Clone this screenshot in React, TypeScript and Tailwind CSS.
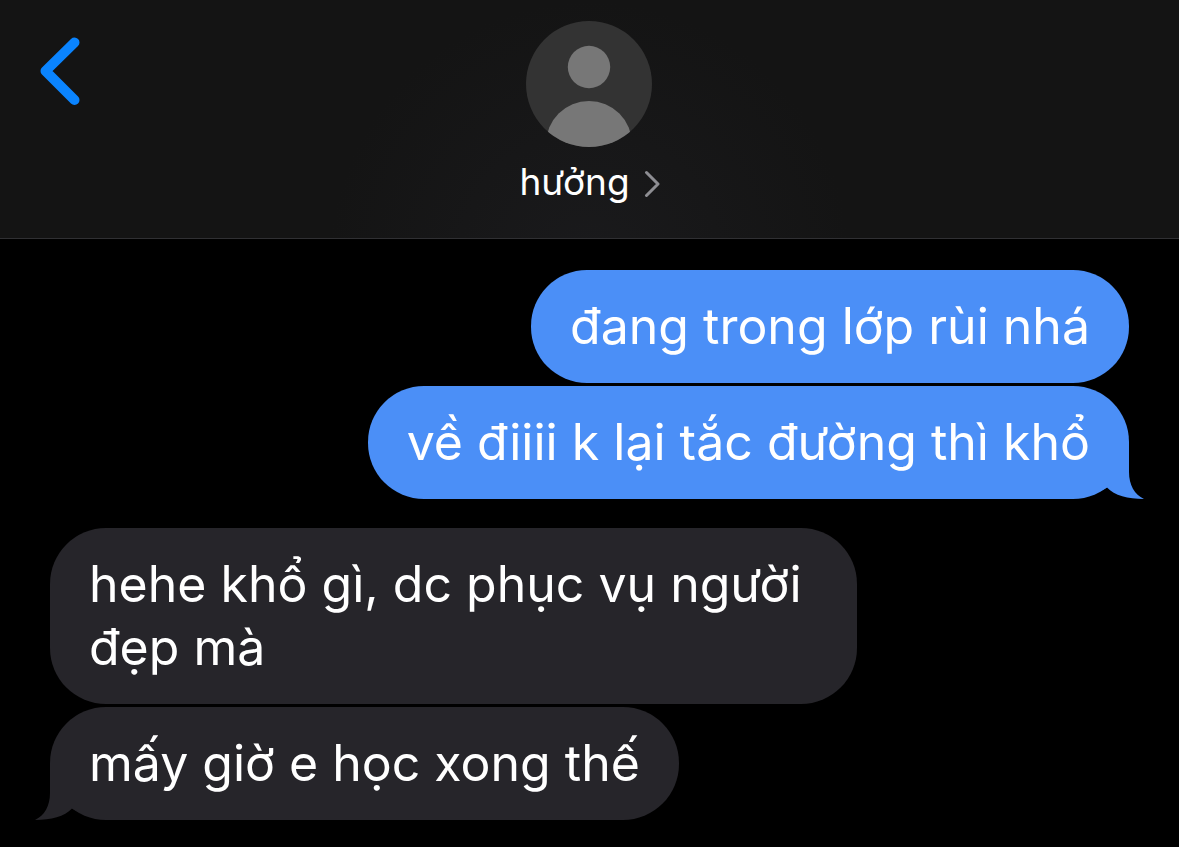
import clsx from 'clsx';

type Message = {
  id: number;
  text: string;
  mine: boolean;
};

const groups: Message[][] = [
  [
    { id: 1, text: 'đang trong lớp rùi nhá', mine: true },
    { id: 2, text: 'về điiii k lại tắc đường thì khổ', mine: true },
  ],
  [
    { id: 3, text: 'hehe khổ gì, dc phục vụ người đẹp mà', mine: false },
    { id: 4, text: 'mấy giờ e học xong thế', mine: false },
  ],
];

function Tail({ mine }: { mine: boolean }) {
  return (
    <svg
      viewBox="0 0 45 57"
      aria-hidden="true"
      className={clsx(
        'absolute bottom-0 h-[57px] w-[45px]',
        mine ? '-right-[15px] fill-[#4b8ff7]' : '-left-[15px] -scale-x-100 fill-[#26252a]'
      )}
    >
      <path d="M30 0V30C30 43 35.500 52.500 45 57C29 57 15.500 53.500 8 45.500L0 50V0Z" />
    </svg>
  );
}

function Bubble({ message, last }: { message: Message; last: boolean }) {
  return (
    <li
      className={clsx(
        'relative max-w-[807px] rounded-[56px] px-[39px] py-[25px] text-[50px] leading-[63px] text-white',
        message.mine ? 'self-end bg-[#4b8ff7]' : 'self-start bg-[#26252a]'
      )}
    >
      {last && <Tail mine={message.mine} />}
      <p className="relative">{message.text}</p>
    </li>
  );
}

export default function App() {
  return (
    <div className="min-h-screen bg-black font-['Inter',sans-serif]">
      <header className="relative flex justify-center border-b border-[#303033] bg-[#141414] bg-[radial-gradient(circle_at_50%_110%,#1a1a1c,#141414_260px)] pt-[21px] pb-[33px]">
        <button type="button" aria-label="Back" className="absolute top-9 left-[38px]">
          <svg viewBox="0 0 44 70" className="h-[70px] w-11" fill="none" stroke="#0a84ff" strokeWidth="10" strokeLinecap="round" strokeLinejoin="round">
            <path d="M36.500 6.500L7.500 35L36.500 64" />
          </svg>
        </button>

        <button type="button" className="flex flex-col items-center gap-[11px]">
          <svg viewBox="0 0 126 126" className="size-[126px]" aria-hidden="true">
            <defs>
              <clipPath id="avatar">
                <circle cx="63" cy="63" r="63" />
              </clipPath>
            </defs>
            <g clipPath="url(#avatar)">
              <rect width="126" height="126" fill="#333333" />
              <circle cx="63" cy="46" r="21.200" fill="#777777" />
              <circle cx="63" cy="123" r="43" fill="#777777" />
            </g>
          </svg>
          <span className="flex items-center gap-[14px] text-[37px] leading-[47px] text-white">
            hưởng
            <svg viewBox="0 0 16 30" className="h-[30px] w-4" fill="none" stroke="#8e8e93" strokeWidth="3" strokeLinecap="round" strokeLinejoin="round">
              <path d="M2.500 5.500L14 17L2.500 28.500" />
            </svg>
          </span>
        </button>
      </header>

      <main className="flex flex-col gap-[29px] px-[50px] pt-[31px] pb-[27px]">
        {groups.map((group) => (
          <ul key={group[0].id} className="flex flex-col gap-[3px]">
            {group.map((message, i) => (
              <Bubble key={message.id} message={message} last={i === group.length - 1} />
            ))}
          </ul>
        ))}
      </main>
    </div>
  );
}
